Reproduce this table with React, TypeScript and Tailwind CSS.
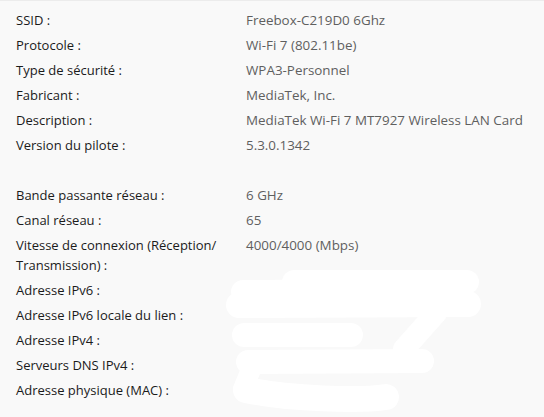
// @ts-nocheck
const rows1 = [
  ['SSID :', 'Freebox-C219D0 6Ghz'],
  ['Protocole :', 'Wi-Fi 7 (802.11be)'],
  ['Type de sécurité :', 'WPA3-Personnel'],
  ['Fabricant :', 'MediaTek, Inc.'],
  ['Description :', 'MediaTek Wi-Fi 7 MT7927 Wireless LAN Card'],
  ['Version du pilote :', '5.3.0.1342'],
]

const rows2 = [
  ['Bande passante réseau :', '6 GHz'],
  ['Canal réseau :', '65'],
  ['Vitesse de connexion (Réception/ Transmission) :', '4000/4000 (Mbps)'],
  ['Adresse IPv6 :', ''],
  ['Adresse IPv6 locale du lien :', ''],
  ['Adresse IPv4 :', ''],
  ['Serveurs DNS IPv4 :', ''],
  ['Adresse physique (MAC) :', ''],
]

function Row({ label, value }) {
  return (
    <div className="flex">
      <div className="w-[214px] shrink-0 text-[#1b1b1b]">{label}</div>
      <div className="pl-4 text-[13.4px] text-[#5f5f5f]">{value}</div>
    </div>
  )
}

export default function App() {
  return (
    <div className="relative w-[544px] h-[417px] overflow-hidden bg-[#f9f9f9] border-t border-[#ececec] font-['Open_Sans',sans-serif] text-[13px] leading-5">
      <div className="flex flex-col gap-[5px] px-4 pt-[9px]">
        {rows1.map(([l, v]) => (
          <Row key={l} label={l} value={v} />
        ))}
        <div className="h-5" />
        {rows2.map(([l, v]) => (
          <Row key={l} label={l} value={v} />
        ))}
      </div>

      {/* masquage des adresses */}
      <svg className="absolute inset-0 pointer-events-none" width="544" height="417" fill="none" stroke="#ffffff" strokeLinecap="round" strokeLinejoin="round">
        <path d="M294 281 L467 281" strokeWidth="24" />
        <path d="M243 291 L400 290" strokeWidth="24" />
        <path d="M239 304 L468 303" strokeWidth="26" />
        <path d="M436 312 L404 348" strokeWidth="22" />
        <path d="M244 334 L351 334" strokeWidth="24" />
        <path d="M248 361 L422 360" strokeWidth="24" />
        <path d="M252 366 L243 388" strokeWidth="20" />
        <path d="M246 389 C290 398 360 400 386 396" strokeWidth="26" />
      </svg>
    </div>
  )
}
